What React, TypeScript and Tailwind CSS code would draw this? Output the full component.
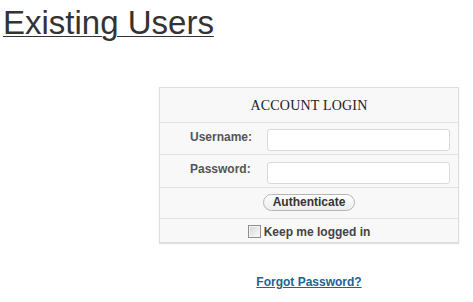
import React from "react";

export default function App() {
  const sans = { fontFamily: '"Liberation Sans", Arial, sans-serif' };
  return (
    <div className="w-[473px] h-[302px] bg-white overflow-hidden" style={sans}>
      <h1 className="pl-[3px] pt-[4px] text-[33px] leading-[38px] text-[#333] underline decoration-1 underline-offset-[2px] font-normal">
        Existing Users
      </h1>
      <div className="ml-[159px] mt-[45px] w-[300px] border border-[#dedede] bg-[#f8f8f8] shadow-[0_1px_1px_rgba(0,0,0,0.12)]">
        <div
          className="h-[34px] flex items-center justify-center text-[14px] tracking-[0.2px] text-[#222]"
          style={{ fontFamily: '"Liberation Serif", "Times New Roman", serif' }}
        >
          ACCOUNT LOGIN
        </div>
        <div className="border-t border-[#e2e2e2] flex pt-[6px] pb-[3px]">
          <div className="w-[107px] pl-[30px] text-[12px] leading-[14px] font-bold text-[#555] pt-[1px]">Username:</div>
          <div className="w-[183px] h-[22px] bg-white border border-[#dadada] rounded-[3px]" />
        </div>
        <div className="border-t border-[#e2e2e2] flex pt-[7px] pb-[3px]">
          <div className="w-[107px] pl-[30px] text-[12px] leading-[14px] font-bold text-[#555]">Password:</div>
          <div className="w-[183px] h-[22px] bg-white border border-[#dadada] rounded-[3px]" />
        </div>
        <div className="border-t border-[#e2e2e2] flex justify-center pt-[6px] pb-[7px]">
          <button className="h-[17px] px-[9px] rounded-full border border-[#b5b5b5] bg-gradient-to-b from-white to-[#ececec] text-[12px] leading-[15px] font-bold text-[#333]">
            Authenticate
          </button>
        </div>
        <div className="border-t border-[#e2e2e2] flex justify-center items-center h-[24px] pt-[2px]">
          <span className="w-[13px] h-[13px] border border-[#8e8f8f] bg-gradient-to-br from-[#d6d6d6] to-[#fafafa] shadow-[inset_0_0_0_1px_#f4f4f4] mr-[3px]" />
          <span className="text-[12px] leading-[14px] font-bold text-[#444]">Keep me logged in</span>
        </div>
      </div>
      <div className="ml-[159px] w-[300px] mt-[32px] flex justify-center">
        <a href="#" className="text-[12px] leading-[14px] font-bold text-[#21628f] underline">
          Forgot Password?
        </a>
      </div>
    </div>
  );
}
